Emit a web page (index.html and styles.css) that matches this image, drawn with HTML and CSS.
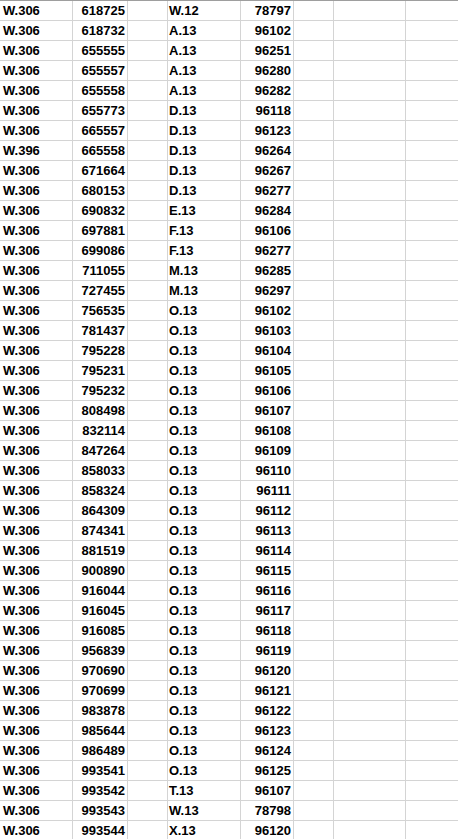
FILE: index.html
```html
<!DOCTYPE html>
<html>
<head>
<meta charset="utf-8">
<link rel="stylesheet" href="styles.css">
</head>
<body>
<div class="sheet">
<div class="row"><div class="cell c-a">W.306</div><div class="cell c-b">618725</div><div class="cell"></div><div class="cell c-d">W.12</div><div class="cell c-e">78797</div><div class="cell"></div><div class="cell"></div><div class="cell c-h"></div></div>
<div class="row"><div class="cell c-a">W.306</div><div class="cell c-b">618732</div><div class="cell"></div><div class="cell c-d">A.13</div><div class="cell c-e">96102</div><div class="cell"></div><div class="cell"></div><div class="cell c-h"></div></div>
<div class="row"><div class="cell c-a">W.306</div><div class="cell c-b">655555</div><div class="cell"></div><div class="cell c-d">A.13</div><div class="cell c-e">96251</div><div class="cell"></div><div class="cell"></div><div class="cell c-h"></div></div>
<div class="row"><div class="cell c-a">W.306</div><div class="cell c-b">655557</div><div class="cell"></div><div class="cell c-d">A.13</div><div class="cell c-e">96280</div><div class="cell"></div><div class="cell"></div><div class="cell c-h"></div></div>
<div class="row"><div class="cell c-a">W.306</div><div class="cell c-b">655558</div><div class="cell"></div><div class="cell c-d">A.13</div><div class="cell c-e">96282</div><div class="cell"></div><div class="cell"></div><div class="cell c-h"></div></div>
<div class="row"><div class="cell c-a">W.306</div><div class="cell c-b">655773</div><div class="cell"></div><div class="cell c-d">D.13</div><div class="cell c-e">96118</div><div class="cell"></div><div class="cell"></div><div class="cell c-h"></div></div>
<div class="row"><div class="cell c-a">W.306</div><div class="cell c-b">665557</div><div class="cell"></div><div class="cell c-d">D.13</div><div class="cell c-e">96123</div><div class="cell"></div><div class="cell"></div><div class="cell c-h"></div></div>
<div class="row"><div class="cell c-a">W.396</div><div class="cell c-b">665558</div><div class="cell"></div><div class="cell c-d">D.13</div><div class="cell c-e">96264</div><div class="cell"></div><div class="cell"></div><div class="cell c-h"></div></div>
<div class="row"><div class="cell c-a">W.306</div><div class="cell c-b">671664</div><div class="cell"></div><div class="cell c-d">D.13</div><div class="cell c-e">96267</div><div class="cell"></div><div class="cell"></div><div class="cell c-h"></div></div>
<div class="row"><div class="cell c-a">W.306</div><div class="cell c-b">680153</div><div class="cell"></div><div class="cell c-d">D.13</div><div class="cell c-e">96277</div><div class="cell"></div><div class="cell"></div><div class="cell c-h"></div></div>
<div class="row"><div class="cell c-a">W.306</div><div class="cell c-b">690832</div><div class="cell"></div><div class="cell c-d">E.13</div><div class="cell c-e">96284</div><div class="cell"></div><div class="cell"></div><div class="cell c-h"></div></div>
<div class="row"><div class="cell c-a">W.306</div><div class="cell c-b">697881</div><div class="cell"></div><div class="cell c-d">F.13</div><div class="cell c-e">96106</div><div class="cell"></div><div class="cell"></div><div class="cell c-h"></div></div>
<div class="row"><div class="cell c-a">W.306</div><div class="cell c-b">699086</div><div class="cell"></div><div class="cell c-d">F.13</div><div class="cell c-e">96277</div><div class="cell"></div><div class="cell"></div><div class="cell c-h"></div></div>
<div class="row"><div class="cell c-a">W.306</div><div class="cell c-b">711055</div><div class="cell"></div><div class="cell c-d">M.13</div><div class="cell c-e">96285</div><div class="cell"></div><div class="cell"></div><div class="cell c-h"></div></div>
<div class="row"><div class="cell c-a">W.306</div><div class="cell c-b">727455</div><div class="cell"></div><div class="cell c-d">M.13</div><div class="cell c-e">96297</div><div class="cell"></div><div class="cell"></div><div class="cell c-h"></div></div>
<div class="row"><div class="cell c-a">W.306</div><div class="cell c-b">756535</div><div class="cell"></div><div class="cell c-d">O.13</div><div class="cell c-e">96102</div><div class="cell"></div><div class="cell"></div><div class="cell c-h"></div></div>
<div class="row"><div class="cell c-a">W.306</div><div class="cell c-b">781437</div><div class="cell"></div><div class="cell c-d">O.13</div><div class="cell c-e">96103</div><div class="cell"></div><div class="cell"></div><div class="cell c-h"></div></div>
<div class="row"><div class="cell c-a">W.306</div><div class="cell c-b">795228</div><div class="cell"></div><div class="cell c-d">O.13</div><div class="cell c-e">96104</div><div class="cell"></div><div class="cell"></div><div class="cell c-h"></div></div>
<div class="row"><div class="cell c-a">W.306</div><div class="cell c-b">795231</div><div class="cell"></div><div class="cell c-d">O.13</div><div class="cell c-e">96105</div><div class="cell"></div><div class="cell"></div><div class="cell c-h"></div></div>
<div class="row"><div class="cell c-a">W.306</div><div class="cell c-b">795232</div><div class="cell"></div><div class="cell c-d">O.13</div><div class="cell c-e">96106</div><div class="cell"></div><div class="cell"></div><div class="cell c-h"></div></div>
<div class="row"><div class="cell c-a">W.306</div><div class="cell c-b">808498</div><div class="cell"></div><div class="cell c-d">O.13</div><div class="cell c-e">96107</div><div class="cell"></div><div class="cell"></div><div class="cell c-h"></div></div>
<div class="row"><div class="cell c-a">W.306</div><div class="cell c-b">832114</div><div class="cell"></div><div class="cell c-d">O.13</div><div class="cell c-e">96108</div><div class="cell"></div><div class="cell"></div><div class="cell c-h"></div></div>
<div class="row"><div class="cell c-a">W.306</div><div class="cell c-b">847264</div><div class="cell"></div><div class="cell c-d">O.13</div><div class="cell c-e">96109</div><div class="cell"></div><div class="cell"></div><div class="cell c-h"></div></div>
<div class="row"><div class="cell c-a">W.306</div><div class="cell c-b">858033</div><div class="cell"></div><div class="cell c-d">O.13</div><div class="cell c-e">96110</div><div class="cell"></div><div class="cell"></div><div class="cell c-h"></div></div>
<div class="row"><div class="cell c-a">W.306</div><div class="cell c-b">858324</div><div class="cell"></div><div class="cell c-d">O.13</div><div class="cell c-e">96111</div><div class="cell"></div><div class="cell"></div><div class="cell c-h"></div></div>
<div class="row"><div class="cell c-a">W.306</div><div class="cell c-b">864309</div><div class="cell"></div><div class="cell c-d">O.13</div><div class="cell c-e">96112</div><div class="cell"></div><div class="cell"></div><div class="cell c-h"></div></div>
<div class="row"><div class="cell c-a">W.306</div><div class="cell c-b">874341</div><div class="cell"></div><div class="cell c-d">O.13</div><div class="cell c-e">96113</div><div class="cell"></div><div class="cell"></div><div class="cell c-h"></div></div>
<div class="row"><div class="cell c-a">W.306</div><div class="cell c-b">881519</div><div class="cell"></div><div class="cell c-d">O.13</div><div class="cell c-e">96114</div><div class="cell"></div><div class="cell"></div><div class="cell c-h"></div></div>
<div class="row"><div class="cell c-a">W.306</div><div class="cell c-b">900890</div><div class="cell"></div><div class="cell c-d">O.13</div><div class="cell c-e">96115</div><div class="cell"></div><div class="cell"></div><div class="cell c-h"></div></div>
<div class="row"><div class="cell c-a">W.306</div><div class="cell c-b">916044</div><div class="cell"></div><div class="cell c-d">O.13</div><div class="cell c-e">96116</div><div class="cell"></div><div class="cell"></div><div class="cell c-h"></div></div>
<div class="row"><div class="cell c-a">W.306</div><div class="cell c-b">916045</div><div class="cell"></div><div class="cell c-d">O.13</div><div class="cell c-e">96117</div><div class="cell"></div><div class="cell"></div><div class="cell c-h"></div></div>
<div class="row"><div class="cell c-a">W.306</div><div class="cell c-b">916085</div><div class="cell"></div><div class="cell c-d">O.13</div><div class="cell c-e">96118</div><div class="cell"></div><div class="cell"></div><div class="cell c-h"></div></div>
<div class="row"><div class="cell c-a">W.306</div><div class="cell c-b">956839</div><div class="cell"></div><div class="cell c-d">O.13</div><div class="cell c-e">96119</div><div class="cell"></div><div class="cell"></div><div class="cell c-h"></div></div>
<div class="row"><div class="cell c-a">W.306</div><div class="cell c-b">970690</div><div class="cell"></div><div class="cell c-d">O.13</div><div class="cell c-e">96120</div><div class="cell"></div><div class="cell"></div><div class="cell c-h"></div></div>
<div class="row"><div class="cell c-a">W.306</div><div class="cell c-b">970699</div><div class="cell"></div><div class="cell c-d">O.13</div><div class="cell c-e">96121</div><div class="cell"></div><div class="cell"></div><div class="cell c-h"></div></div>
<div class="row"><div class="cell c-a">W.306</div><div class="cell c-b">983878</div><div class="cell"></div><div class="cell c-d">O.13</div><div class="cell c-e">96122</div><div class="cell"></div><div class="cell"></div><div class="cell c-h"></div></div>
<div class="row"><div class="cell c-a">W.306</div><div class="cell c-b">985644</div><div class="cell"></div><div class="cell c-d">O.13</div><div class="cell c-e">96123</div><div class="cell"></div><div class="cell"></div><div class="cell c-h"></div></div>
<div class="row"><div class="cell c-a">W.306</div><div class="cell c-b">986489</div><div class="cell"></div><div class="cell c-d">O.13</div><div class="cell c-e">96124</div><div class="cell"></div><div class="cell"></div><div class="cell c-h"></div></div>
<div class="row"><div class="cell c-a">W.306</div><div class="cell c-b">993541</div><div class="cell"></div><div class="cell c-d">O.13</div><div class="cell c-e">96125</div><div class="cell"></div><div class="cell"></div><div class="cell c-h"></div></div>
<div class="row"><div class="cell c-a">W.306</div><div class="cell c-b">993542</div><div class="cell"></div><div class="cell c-d">T.13</div><div class="cell c-e">96107</div><div class="cell"></div><div class="cell"></div><div class="cell c-h"></div></div>
<div class="row"><div class="cell c-a">W.306</div><div class="cell c-b">993543</div><div class="cell"></div><div class="cell c-d">W.13</div><div class="cell c-e">78798</div><div class="cell"></div><div class="cell"></div><div class="cell c-h"></div></div>
<div class="row"><div class="cell c-a">W.306</div><div class="cell c-b">993544</div><div class="cell"></div><div class="cell c-d">X.13</div><div class="cell c-e">96120</div><div class="cell"></div><div class="cell"></div><div class="cell c-h"></div></div>
</div>
</body>
</html>
```

FILE: styles.css
```css
html, body {
  margin: 0;
  padding: 0;
  background: #ffffff;
}
.sheet {
  border-top: 1px solid #9e9e9e;
  font-family: "Liberation Sans", Arial, sans-serif;
  font-weight: bold;
  font-size: 13px;
  color: #000000;
}
.row {
  display: grid;
  grid-template-columns: 73px 55px 40px 73px 53px 40px 72px 1fr;
}
.cell {
  height: 19px;
  line-height: 20px;
  border-right: 1px solid #d4d4d4;
  border-bottom: 1px solid #d4d4d4;
  white-space: nowrap;
  overflow: hidden;
}
.c-a { padding-left: 3px; }
.c-b { text-align: right; padding-right: 2px; }
.c-d { padding-left: 1px; }
.c-e { text-align: right; padding-right: 2px; }
.c-h { border-right: none; }
```
